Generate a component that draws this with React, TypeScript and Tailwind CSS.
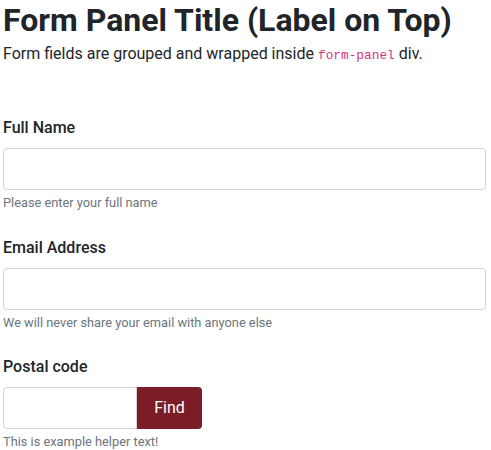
import React from 'react';

const sans = "font-['Roboto','Liberation_Sans',sans-serif]";

interface FieldProps {
  label: string;
  help: string;
  type?: string;
}

const Field: React.FC<FieldProps> = ({ label, help, type = 'text' }) => (
  <div className="flex flex-col">
    <label className="mb-2 text-base leading-6 font-medium text-[#212529]">{label}</label>
    <input
      type={type}
      className="h-[42px] w-full rounded-[4px] border border-[#ced4da] bg-white px-3 text-base text-[#212529] outline-none"
    />
    <div className="mt-[3px] text-[12.8px] leading-[1.5] text-[#6c757d]">{help}</div>
  </div>
);

export default function App() {
  return (
    <div className={`${sans} bg-white px-[3px] pt-[1px] text-[#212529] w-[491px] h-[450px] overflow-hidden`}>
      <h1 className="text-[32px] leading-[1.2] font-bold">Form Panel Title (Label on Top)</h1>
      <p className="mt-[3px] h-6 text-base leading-6">
        Form fields are grouped and wrapped inside{' '}
        <code className="font-['Liberation_Mono',monospace] text-[12.8px] leading-none text-[#d63384]">form-panel</code> div.
      </p>

      <form className="mt-[50px] flex flex-col gap-[23px] pr-[2px]" onSubmit={e => e.preventDefault()}>
        <Field label="Full Name" help="Please enter your full name" />
        <Field label="Email Address" help="We will never share your email with anyone else" type="email" />

        {/* postal code with attached button */}
        <div className="flex flex-col">
          <label className="mb-2 text-base leading-6 font-medium text-[#212529]">Postal code</label>
          <div className="flex">
            <input
              type="text"
              className="h-[42px] w-[134px] rounded-l-[4px] border border-[#ced4da] bg-white px-3 text-base outline-none"
            />
            <button
              type="button"
              className="h-[42px] w-[65px] rounded-r-[4px] bg-[#7b1c26] text-base text-white"
            >
              Find
            </button>
          </div>
          <div className="mt-[3px] text-[12.8px] leading-[1.5] text-[#6c757d]">This is example helper text!</div>
        </div>
      </form>
    </div>
  );
}
